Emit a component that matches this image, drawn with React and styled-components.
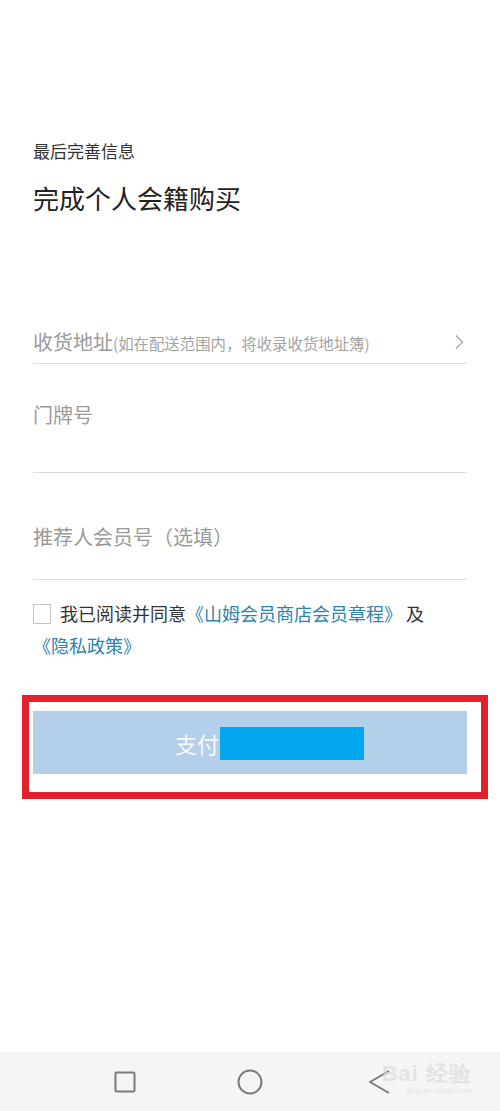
import React from "react";
import styled, { createGlobalStyle } from "styled-components";

const Global = createGlobalStyle`
  html, body { margin: 0; padding: 0; background: #ffffff; }
  body { font-family: "Noto Sans CJK SC", "Noto Sans", sans-serif; }
  * { box-sizing: border-box; }
`;

const Page = styled.div`
  min-height: 100vh;
  display: flex;
  flex-direction: column;
  background: #ffffff;
`;

const Main = styled.main`
  padding: 139px 33px 0 33px;
  display: flex;
  flex-direction: column;
`;

const Kicker = styled.div`
  font-size: 17px;
  line-height: 24px;
  color: #333333;
`;

const Title = styled.h1`
  margin: 18px 0 0 0;
  font-size: 26px;
  line-height: 34px;
  font-weight: 400;
  color: #222222;
`;

const Field = styled.div`
  display: flex;
  align-items: ${(p) => (p.$center ? "center" : "flex-start")};
  justify-content: space-between;
  margin-top: ${(p) => p.$mt || 0}px;
  height: ${(p) => p.$h}px;
  padding-top: ${(p) => p.$pt || 0}px;
  border-bottom: 1px solid #dedede;
`;

const Placeholder = styled.span`
  font-size: 20px;
  line-height: 30px;
  color: #9a9a9a;
  white-space: nowrap;
`;

const Hint = styled.span`
  font-size: 15.4px;
  color: #a3a3a3;
`;

const Chevron = styled.svg`
  width: 10px;
  height: 16px;
  margin-right: 3px;
  flex: none;
`;

const Agreement = styled.p`
  margin: 17px 0 0 0;
  font-size: 18px;
  line-height: 32px;
  color: #333333;
`;

const Box = styled.span`
  display: inline-block;
  width: 18px;
  height: 20px;
  border: 1px solid #c4c4c4;
  vertical-align: -3px;
  margin-right: 9px;
`;

const Link = styled.span`
  color: #2c83ad;
  white-space: ${(p) => (p.$nowrap ? "nowrap" : "normal")};
`;

const Frame = styled.div`
  margin: 34px -21px 0 -11px;
  border: 7px solid #e2212b;
  padding: 9px 14px 18px 4px;
`;

const PayButton = styled.div`
  height: 63px;
  background: #b3cfe9;
  display: flex;
  align-items: center;
  padding-left: 142px;
  font-size: 22px;
  color: rgba(255, 255, 255, 0.92);
`;

const Redact = styled.span`
  display: inline-block;
  width: 144px;
  height: 33px;
  background: #00a7ef;
  margin-left: 1px;
  margin-top: 2px;
`;

const NavBar = styled.nav`
  margin-top: auto;
  height: 59px;
  background: #f5f5f5;
  display: flex;
  align-items: center;
  padding-left: 114px;
  gap: 101px;
  position: relative;
`;

const NavIcon = styled.svg`
  display: block;
  flex: none;
  margin-left: ${(p) => p.$ml || 0}px;
`;

const Watermark = styled.div`
  position: absolute;
  right: 28px;
  top: 10px;
  display: flex;
  flex-direction: column;
  align-items: flex-end;
  color: rgba(215, 215, 215, 0.6);
  font-family: "Liberation Sans", sans-serif;
  pointer-events: none;
`;

const WmMain = styled.span`
  font-size: 22px;
  font-weight: 700;
  letter-spacing: 1px;
  line-height: 24px;
`;

const WmSub = styled.span`
  font-size: 8px;
  line-height: 10px;
`;

export default function App() {
  return (
    <Page>
      <Global />
      <Main>
        <Kicker>最后完善信息</Kicker>
        <Title>完成个人会籍购买</Title>

        <Field $mt={106} $h={43} $center>
          <Placeholder>
            收货地址<Hint>(如在配送范围内，将收录收货地址簿)</Hint>
          </Placeholder>
          <Chevron viewBox="0 0 10 16">
            <path d="M2 1.5 L8.5 8 L2 14.5" fill="none" stroke="#a8a8a8" strokeWidth="1.4" />
          </Chevron>
        </Field>

        <Field $h={109} $pt={36}>
          <Placeholder>门牌号</Placeholder>
        </Field>

        <Field $h={107} $pt={49}>
          <Placeholder>推荐人会员号（选填）</Placeholder>
        </Field>

        <Agreement>
          <Box />
          我已阅读并同意<Link>《山姆会员商店会员章程》</Link> 及{" "}
          <Link $nowrap>《隐私政策》</Link>
        </Agreement>

        <Frame>
          <PayButton>
            支付
            <Redact />
          </PayButton>
        </Frame>
      </Main>

      <NavBar>
        <NavIcon width="22" height="22" viewBox="0 0 22 22">
          <rect x="1.5" y="1.5" width="19" height="19" rx="1" fill="none" stroke="#7a7a7a" strokeWidth="2" />
        </NavIcon>
        <NavIcon width="26" height="26" viewBox="0 0 26 26">
          <circle cx="13" cy="13" r="11.5" fill="none" stroke="#7a7a7a" strokeWidth="2" />
        </NavIcon>
        <NavIcon $ml={4} width="24" height="26" viewBox="0 0 24 26">
          <path d="M21 2 L2 13 L21 24" fill="none" stroke="#7a7a7a" strokeWidth="2" strokeLinejoin="round" />
        </NavIcon>
        <Watermark>
          <WmMain>Bai 经验</WmMain>
          <WmSub>jingyan.baidu.com</WmSub>
        </Watermark>
      </NavBar>
    </Page>
  );
}
